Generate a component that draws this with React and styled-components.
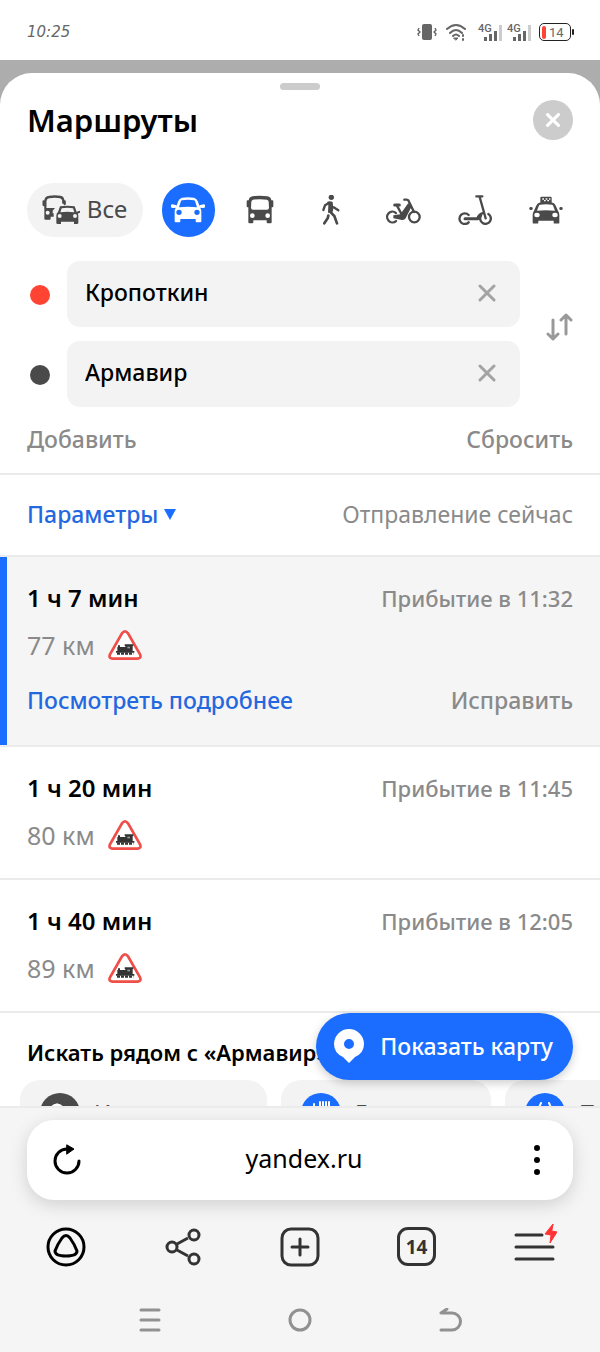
import React, { useState } from 'react';
import styled, { createGlobalStyle } from 'styled-components';

const colors = {
  blue: '#1a6dff',
  link: '#2468e0',
  red: '#ff4433',
  dark: '#4a4a4a',
  text: '#000',
  muted: '#8a8a8a',
  field: '#f3f3f3',
  panel: '#f5f5f5',
  line: '#ebebeb',
};

const GlobalStyle = createGlobalStyle`
  * {
    box-sizing: border-box;
  }

  body {
    margin: 0;
    background: #adadad;
    color: ${colors.text};
    font-family: 'Noto Sans', 'Open Sans', sans-serif;
  }

  button, input {
    margin: 0;
    padding: 0;
    border: 0;
    background: none;
    color: inherit;
    font: inherit;
  }

  button {
    cursor: pointer;
  }

  h1, h2, p, ul {
    margin: 0;
    padding: 0;
    font-weight: 500;
  }

  svg {
    display: block;
    flex: none;
  }
`;

const Screen = styled.div`
  height: 100vh;
  display: flex;
  flex-direction: column;
`;

const StatusBar = styled.header`
  height: 60px;
  flex: none;
  padding: 4px 26px 0 27px;
  display: flex;
  align-items: center;
  justify-content: space-between;
  background: #fff;
  color: #666;
`;

const Clock = styled.time`
  font-family: 'DejaVu Sans', sans-serif;
  font-size: 15px;
  font-style: italic;
`;

const StatusIcons = styled.div`
  display: flex;
  align-items: center;
  gap: 8px;
`;

const Signals = styled.div`
  margin-left: 3px;
  display: flex;
  gap: 5px;
`;

const SignalText = styled.text`
  font-family: Roboto, sans-serif;
  font-size: 11px;
  font-weight: 500;
  fill: #666;
`;

const Battery = styled.div`
  width: 32px;
  height: 18px;
  margin-right: 3px;
  padding: 1px;
  display: flex;
  align-items: center;
  gap: 3px;
  position: relative;
  border: 1px solid #222;
  border-radius: 5px;
  font-family: Roboto, sans-serif;
  font-size: 13px;

  &::before {
    content: '';
    width: 4px;
    height: 13px;
    margin-left: 1px;
    border-radius: 2px;
    background: ${colors.red};
  }

  &::after {
    content: '';
    position: absolute;
    right: -4px;
    top: 5px;
    width: 2px;
    height: 6px;
    border-radius: 1px;
    background: #222;
  }
`;

const SheetArea = styled.div`
  flex: 1;
  min-height: 0;
  padding-top: 13px;
  display: flex;
  position: relative;
`;

const Sheet = styled.main`
  flex: 1;
  min-width: 0;
  overflow: hidden;
  background: #fff;
  border-radius: 32px 32px 0 0;
`;

const Handle = styled.div`
  width: 40px;
  height: 7px;
  margin: 10px auto;
  border-radius: 4px;
  background: #ccc;
`;

const SheetHead = styled.div`
  padding: 0 27px;
  display: flex;
  align-items: center;
  justify-content: space-between;
`;

const Title = styled.h1`
  font-size: 31px;
  line-height: 40px;
  font-weight: 600;
`;

const CloseButton = styled.button`
  width: 40px;
  height: 40px;
  display: grid;
  place-items: center;
  border-radius: 50%;
  background: #ccc;
`;

const Modes = styled.nav`
  padding: 43px 27px 24px;
  display: flex;
  justify-content: space-between;
`;

const ModeButton = styled.button`
  height: 54px;
  width: ${({ $wide }) => ($wide ? '116px' : '53px')};
  display: flex;
  align-items: center;
  justify-content: center;
  gap: 6px;
  border-radius: 27px;
  font-size: 24px;
  color: ${({ $active }) => ($active ? '#fff' : colors.dark)};
  background: ${({ $active, $wide }) => ($active ? colors.blue : $wide ? colors.field : 'transparent')};
`;

const ModeLabel = styled.span`
  padding: 0 2px 4px 0;
`;

const Points = styled.form`
  padding: 0 27px;
  display: flex;
  align-items: center;
  justify-content: space-between;
`;

const PointList = styled.div`
  flex: 1;
  display: flex;
  flex-direction: column;
  gap: 14px;
`;

const Point = styled.label`
  display: flex;
  align-items: center;
  gap: 17px;
`;

const Dot = styled.span`
  width: 20px;
  height: 20px;
  margin: 2px 0 0 3px;
  border-radius: 50%;
  background: ${({ $color }) => $color};
`;

const Field = styled.span`
  flex: 1;
  min-width: 0;
  height: 66px;
  padding: 0 24px 2px 18px;
  display: flex;
  align-items: center;
  border-radius: 13px;
  background: ${colors.field};

  input {
    flex: 1;
    min-width: 0;
    padding-bottom: 2px;
    outline: 0;
    font-size: 23px;
    font-weight: 500;
  }
`;

const SwapButton = styled.button`
  width: 27px;
  margin-left: 26px;
  padding-bottom: 14px;
`;

const Line = styled.div`
  display: flex;
  align-items: center;
  justify-content: space-between;
`;

const ActionsLine = styled(Line)`
  padding: 16px 27px 18px;
  border-bottom: 2px solid ${colors.line};
`;

const OptionsLine = styled(Line)`
  padding: 23px 27px 25px;
  border-bottom: 2px solid ${colors.line};
`;

const TextButton = styled.button`
  display: flex;
  align-items: center;
  gap: 6px;
  font-size: 23px;
  line-height: 32px;
  font-weight: ${({ $light }) => ($light ? 400 : 500)};
  color: ${({ $blue }) => ($blue ? colors.link : colors.muted)};
`;

const Route = styled.li`
  list-style: none;
  padding: 22px 27px;
  border-bottom: 2px solid ${colors.line};
  background: ${({ $selected }) => ($selected ? colors.panel : '#fff')};
  box-shadow: ${({ $selected }) => ($selected ? `inset 7px 0 ${colors.blue}` : 'none')};
`;

const Duration = styled.h2`
  font-size: 24px;
  line-height: 38px;
  font-weight: 600;
`;

const Arrival = styled.span`
  font-size: 22px;
  line-height: 38px;
  color: ${colors.muted};
`;

const Distance = styled.p`
  margin-top: 7px;
  display: flex;
  align-items: center;
  gap: 13px;
  font-size: 25px;
  line-height: 42px;
  font-weight: 400;
  color: ${colors.muted};
`;

const RouteActions = styled(Line)`
  margin-top: 18px;
  padding-bottom: 7px;
`;

const Nearby = styled.section`
  padding-top: 23px;
`;

const NearbyTitle = styled.h2`
  padding: 0 27px;
  font-size: 22px;
  line-height: 32px;
  font-weight: 600;
  white-space: nowrap;
`;

const Chips = styled.div`
  padding: 12px 20px 0;
  display: flex;
  gap: 14px;
`;

const Chip = styled.button`
  flex: none;
  width: ${({ $width }) => $width}px;
  height: 66px;
  padding: 0 20px;
  display: flex;
  align-items: center;
  gap: 14px;
  border-radius: 20px;
  background: ${colors.field};
  font-size: 23px;
  color: ${colors.dark};
  white-space: nowrap;
`;

const MapButton = styled.button`
  position: absolute;
  right: 27px;
  bottom: 26px;
  height: 67px;
  padding: 0 20px 2px 18px;
  display: flex;
  align-items: center;
  gap: 16px;
  border-radius: 34px;
  background: ${colors.blue};
  box-shadow: 0 3px 10px rgba(0, 0, 0, .2);
  font-size: 23px;
  font-weight: 500;
  color: #fff;
`;

const Browser = styled.footer`
  flex: none;
  border-top: 2px solid ${colors.line};
  background: ${colors.panel};
  position: relative;
`;

const AddressBar = styled.div`
  height: 80px;
  margin: 12px 27px 0;
  padding: 0 24px;
  display: flex;
  align-items: center;
  justify-content: space-between;
  border-radius: 27px;
  background: #fff;
  box-shadow: 0 5px 18px rgba(0, 0, 0, .15);
  font-size: 25px;

  span {
    padding-bottom: 4px;
  }
`;

const Toolbar = styled.nav`
  height: 93px;
  padding: 0 8px 0 7px;
  display: grid;
  grid-template-columns: repeat(5, 1fr);
  align-items: center;
  justify-items: center;
`;

const TabCount = styled.button`
  width: 39px;
  height: 39px;
  border: 3px solid #333;
  border-radius: 11px;
  font-size: 19px;
  line-height: 32px;
  font-weight: 700;
  color: #333;
`;

const SystemNav = styled.nav`
  height: 59px;
  padding: 0 12.5% 6px;
  display: grid;
  grid-template-columns: repeat(3, 1fr);
  align-items: center;
  justify-items: center;
`;

const lineProps = { fill: 'none', stroke: 'currentColor', strokeLinecap: 'round', strokeLinejoin: 'round' };

const ModeIcon = ({ children }) => (
  <svg width="36" height="30" viewBox="0 0 108 90" fill="currentColor" fillRule="evenodd">{children}</svg>
);

// body, windscreen and headlights, shared by the car and the taxi
const CAR = 'M36 8Q54 5 72 8Q80 10 83 18L90 37Q94 43 94 52V79Q94 82 91 82H80Q77 82 77 79V72H31V79Q31 82 28 82H17Q14 82 14 79V52Q14 43 18 37L25 18Q28 10 36 8ZM36 16Q54 12 72 16Q75 17 76 21L81 37Q54 33 27 37L32 21Q33 17 36 16ZM19 52a8 8 0 1 0 16 0a8 8 0 1 0-16 0ZM73 52a8 8 0 1 0 16 0a8 8 0 1 0-16 0Z';

const CarIcon = () => (
  <ModeIcon>
    <path d="M3 31Q3 28 7 28L20 31V38L9 39Q3 39 3 35ZM105 31Q105 28 101 28L88 31V38L99 39Q105 39 105 35Z" />
    <path d={CAR} />
  </ModeIcon>
);

const BusIcon = () => (
  <ModeIcon>
    <path d="M32 4Q54 0 76 4Q87 6 88 16H91Q94 16 94 20V34Q94 37 91 37H89V82Q89 85 86 85H77Q74 85 74 82V76H34V82Q34 85 31 85H22Q19 85 19 82V37H17Q14 37 14 34V20Q14 16 17 16H20Q21 6 32 4ZM33 14Q54 11 75 14Q79 15 80 20L81 38Q81 44 75 44H33Q27 44 27 38L28 20Q29 15 33 14ZM24 62a7 7 0 1 0 14 0a7 7 0 1 0-14 0ZM70 62a7 7 0 1 0 14 0a7 7 0 1 0-14 0Z" />
  </ModeIcon>
);

const AllIcon = () => (
  <svg width="40" height="32" viewBox="0 0 120 96" fill="currentColor" fillRule="evenodd">
    <path {...lineProps} strokeWidth="7" d="M13 40V20Q15 10 24 9Q42 6 58 9Q66 11 67 20V26" />
    <path {...lineProps} strokeWidth="7" d="M8 22V33M71 22V30" />
    <path d="M10 42H42L35 50V58H38V68H29V74Q29 77 26 77H13Q10 77 10 74ZM14 56a6 6 0 1 0 12 0a6 6 0 1 0-12 0Z" />
    <path d="M57 37Q79 33 101 37L107 54Q112 58 112 65V86Q112 90 108 90H99V83H60V90H50Q46 90 46 86V65Q46 58 51 54Z" />
    <path d="M62 43Q79 40 96 43L100 55Q79 52 58 55Z" fill={colors.field} />
    <circle cx="56" cy="66" r="6" fill={colors.field} />
    <circle cx="102" cy="66" r="6" fill={colors.field} />
    <path d="M107 53L117 50V56L109 59Z" />
  </svg>
);

const WalkIcon = () => (
  <ModeIcon>
    <circle cx="55" cy="7" r="8" />
    <path d="M42 21Q50 17 59 21L61 42L58 54L45 53L46 30Z" />
    <path {...lineProps} strokeWidth="7" d="M48 24L36 31L31 45M62 37L76 46" />
    <path {...lineProps} strokeWidth="8" d="M51 50L64 63L72 85M46 62L44 70L34 85" />
  </ModeIcon>
);

const BikeIcon = () => (
  <ModeIcon>
    <path {...lineProps} strokeWidth="7" d="M33 54A16 16 0 1 0 33 78M104 66A16 16 0 1 1 72 66A16 16 0 1 1 104 66" />
    <path {...lineProps} strokeWidth="7" d="M58 14H64Q70 14 72 20L87 51M36 32L51 60" />
    <path {...lineProps} strokeWidth="9" d="M29 30H43" />
    <path d="M25 61L46 58L70 24L79 36L62 70Q58 76 51 75L25 70Z" />
  </ModeIcon>
);

const ScooterIcon = () => (
  <ModeIcon>
    <path {...lineProps} strokeWidth="7" d="M35 60A16 16 0 1 0 35 82M94 57A16 16 0 1 1 72 62" />
    <path {...lineProps} strokeWidth="7" d="M58 4H76M68 6L86 70" />
    <path {...lineProps} strokeWidth="9" d="M24 71H62" />
    <path d="M57 71Q62 53 80 50L81 57Q69 61 67 75H57Z" />
  </ModeIcon>
);

const TaxiIcon = () => (
  <ModeIcon>
    <path d="M40 5H68Q71 5 71 9V24H37V9Q37 5 40 5ZM43 10V14H48V10ZM53 10V14H58V10ZM63 10V14H67V10ZM48 15V19H53V15ZM58 15V19H63V15Z" />
    <path transform="translate(0 16) scale(1 .85)" d={CAR} />
    <rect x="4" y="36" width="10" height="9" rx="4" />
    <rect x="94" y="36" width="10" height="9" rx="4" />
  </ModeIcon>
);

const CrossIcon = ({ size, width, color }) => (
  <svg width={size} height={size} viewBox="0 0 18 18" fill="none" stroke={color} strokeWidth={width} strokeLinecap="round">
    <path d="M2 2L16 16M16 2L2 16" />
  </svg>
);

const SwapIcon = () => (
  <svg width="27" height="28" viewBox="0 0 27 28" fill="none" stroke="#999" strokeWidth="3" strokeLinecap="round" strokeLinejoin="round">
    <path d="M7 7V26M2 21L7 26L12 21M20 21V2M15 7L20 2L25 7" />
  </svg>
);

const CrossingSign = () => (
  <svg width="34" height="30" viewBox="0 0 102 90" role="img" aria-label="Железнодорожный переезд">
    <path d="M42 10Q51-2 60 10L96 73Q101 85 89 86H13Q1 85 6 73Z" fill="#fff" stroke="#f04e49" strokeWidth="8" />
    <path d="M30 46H36V51H52V48H50V43H76V48H74V63H79V68H24V63H28V51H30Z" fill="#333" />
    <path d="M58 50H66V55H58Z" fill="#999" />
    <path d="M27 71H76" stroke="#333" strokeWidth="7" strokeDasharray="9 3" />
  </svg>
);

const Signal = () => (
  <svg width="24" height="18" viewBox="0 0 24 18" fill="#666">
    <SignalText x="0" y="9">4G</SignalText>
    <path d="M6 14h3v4H6zM11 11h3v7h-3zM16 8h3v10h-3z" />
    <path d="M21 2h3v16h-3z" fill="#ccc" />
  </svg>
);

const modes = [
  { id: 'car', label: 'На машине', Icon: CarIcon },
  { id: 'bus', label: 'На автобусе', Icon: BusIcon },
  { id: 'walk', label: 'Пешком', Icon: WalkIcon },
  { id: 'bike', label: 'На велосипеде', Icon: BikeIcon },
  { id: 'scooter', label: 'На самокате', Icon: ScooterIcon },
  { id: 'taxi', label: 'На такси', Icon: TaxiIcon },
];

const routes = [
  { time: '1 ч 7 мин', arrival: '11:32', distance: '77 км' },
  { time: '1 ч 20 мин', arrival: '11:45', distance: '80 км' },
  { time: '1 ч 40 мин', arrival: '12:05', distance: '89 км' },
];

const chips = [
  {
    label: 'Искать места',
    width: 247,
    color: colors.dark,
    icon: <path {...lineProps} strokeWidth="3" d="M17 12a6 6 0 1 0 .1 0M22 22l6 6" />,
  },
  {
    label: 'Где поесть',
    width: 210,
    color: colors.blue,
    icon: <path {...lineProps} strokeWidth="2" d="M13 11v19M19 9v8M22 9v21M25 9v8M28 9v8" />,
  },
  {
    label: 'Продукты',
    width: 210,
    color: colors.blue,
    icon: <path {...lineProps} strokeWidth="2" d="M16 10l-4 9h16l-4-9M12 19l3 10h10l3-10" />,
  },
];

const PointField = ({ color, label, value, onChange }) => (
  <Point>
    <Dot $color={color} />
    <Field>
      <input aria-label={label} value={value} onChange={(e) => onChange(e.target.value)} />
      <button type="button" aria-label="Очистить" onClick={() => onChange('')}>
        <CrossIcon size={18} width={3} color="#a3a3a3" />
      </button>
    </Field>
  </Point>
);

const App = () => {
  const [mode, setMode] = useState('car');
  const [selected, setSelected] = useState(0);
  const [from, setFrom] = useState('Кропоткин');
  const [to, setTo] = useState('Армавир');

  const swap = () => {
    setFrom(to);
    setTo(from);
  };

  return (
    <Screen>
      <GlobalStyle />
      <StatusBar>
        <Clock>10:25</Clock>
        <StatusIcons>
          <svg width="20" height="18" viewBox="0 0 20 18" fill="#666">
            <rect x="5" y="1" width="10" height="16" rx="2" />
            <path d="M2 5L1 7L3 9L1 11L2 13M18 5L19 7L17 9L19 11L18 13" fill="none" stroke="#666" strokeWidth="1.4" />
          </svg>
          <svg width="22" height="18" viewBox="0 0 22 18" fill="none" stroke="#666" strokeWidth="2" strokeLinecap="round">
            <path d="M2 6Q11-2 20 6M5 10Q11 4 17 10M8 13Q11 10 14 13" />
            <path d="M9 15H13L11 17Z" fill="#666" strokeWidth="1" />
            <path d="M18 12v1M18 16v1" />
          </svg>
          <Signals>
            <Signal />
            <Signal />
          </Signals>
          <Battery>14</Battery>
        </StatusIcons>
      </StatusBar>

      <SheetArea>
        <Sheet>
          <Handle />
          <SheetHead>
            <Title>Маршруты</Title>
            <CloseButton aria-label="Закрыть">
              <CrossIcon size={14} width={4} color="#fff" />
            </CloseButton>
          </SheetHead>

          <Modes>
            <ModeButton $wide $active={mode === 'all'} onClick={() => setMode('all')}>
              <AllIcon />
              <ModeLabel>Все</ModeLabel>
            </ModeButton>
            {modes.map(({ id, label, Icon }) => (
              <ModeButton key={id} aria-label={label} $active={mode === id} onClick={() => setMode(id)}>
                <Icon />
              </ModeButton>
            ))}
          </Modes>

          <Points>
            <PointList>
              <PointField color={colors.red} label="Откуда" value={from} onChange={setFrom} />
              <PointField color={colors.dark} label="Куда" value={to} onChange={setTo} />
            </PointList>
            <SwapButton type="button" aria-label="Поменять местами" onClick={swap}>
              <SwapIcon />
            </SwapButton>
          </Points>

          <ActionsLine>
            <TextButton>Добавить</TextButton>
            <TextButton>Сбросить</TextButton>
          </ActionsLine>

          <OptionsLine>
            <TextButton $blue>
              Параметры
              <svg width="12" height="11" viewBox="0 0 12 11" fill={colors.blue}>
                <path d="M0 0H12L6 11Z" />
              </svg>
            </TextButton>
            <TextButton $light>Отправление сейчас</TextButton>
          </OptionsLine>

          <ul>
            {routes.map(({ time, arrival, distance }, i) => (
              <Route key={time} $selected={i === selected} onClick={() => setSelected(i)}>
                <Line>
                  <Duration>{time}</Duration>
                  <Arrival>Прибытие в {arrival}</Arrival>
                </Line>
                <Distance>
                  {distance}
                  <CrossingSign />
                </Distance>
                {i === selected && (
                  <RouteActions>
                    <TextButton $blue>Посмотреть подробнее</TextButton>
                    <TextButton>Исправить</TextButton>
                  </RouteActions>
                )}
              </Route>
            ))}
          </ul>

          <Nearby>
            <NearbyTitle>Искать рядом с «Армавир»</NearbyTitle>
            <Chips>
              {chips.map(({ label, width, color, icon }) => (
                <Chip key={label} $width={width}>
                  <svg width="40" height="40" viewBox="0 0 40 40" color="#fff">
                    <circle cx="20" cy="20" r="20" fill={color} />
                    {icon}
                  </svg>
                  <span>{label}</span>
                </Chip>
              ))}
            </Chips>
          </Nearby>
        </Sheet>

        <MapButton>
          <svg width="30" height="34" viewBox="0 0 30 34" fill="#fff" fillRule="evenodd">
            <path d="M15 0A15 15 0 0 1 30 15Q30 24 21 28L15 34L9 28Q0 24 0 15A15 15 0 0 1 15 0ZM10 15a5 5 0 1 0 10 0a5 5 0 1 0-10 0Z" />
          </svg>
          Показать карту
        </MapButton>
      </SheetArea>

      <Browser>
        <AddressBar>
          <button aria-label="Обновить">
            <svg width="32" height="32" viewBox="0 0 32 32" fill="none" stroke="#000" strokeWidth="3" strokeLinecap="round">
              <path d="M16 5A12 12 0 1 0 28 17" />
              <path d="M16 1L23 5L16 10Z" fill="#000" strokeWidth="1" strokeLinejoin="round" />
            </svg>
          </button>
          <span>yandex.ru</span>
          <button aria-label="Меню страницы">
            <svg width="24" height="30" viewBox="0 0 24 30">
              <circle cx="12" cy="3" r="3" />
              <circle cx="12" cy="15" r="3" />
              <circle cx="12" cy="27" r="3" />
            </svg>
          </button>
        </AddressBar>

        <Toolbar>
          <button aria-label="Алиса">
            <svg width="40" height="40" viewBox="0 0 40 40" fill="none" stroke="#000" strokeWidth="3">
              <circle cx="20" cy="20" r="18" />
              <path d="M16 11Q20 6 24 11Q29 18 31 24Q31 29 20 29Q9 29 9 24Q11 18 16 11Z" />
            </svg>
          </button>
          <button aria-label="Поделиться">
            <svg width="36" height="38" viewBox="0 0 36 38" fill="none" stroke="#333" strokeWidth="3">
              <path d="M12 16L23 10M12 22L23 28" />
              <circle cx="7" cy="19" r="5" />
              <circle cx="29" cy="7" r="5" />
              <circle cx="29" cy="31" r="5" />
            </svg>
          </button>
          <button aria-label="Новая вкладка">
            <svg width="40" height="40" viewBox="0 0 40 40" fill="none" stroke="#333" strokeWidth="3" strokeLinecap="round">
              <rect x="2" y="2" width="36" height="36" rx="9" />
              <path d="M20 12V28M12 20H28" />
            </svg>
          </button>
          <TabCount aria-label="Вкладки">14</TabCount>
          <button aria-label="Меню">
            <svg width="46" height="46" viewBox="0 0 46 46" fill="none" stroke="#333" strokeWidth="3" strokeLinecap="round">
              <path d="M5 11H31M5 23H42M5 35H42" />
              <path d="M42 0L34 10L40 11L39 19L46 8L41 7Z" fill="#f33" stroke="#f33" strokeWidth="1" />
            </svg>
          </button>
        </Toolbar>

        <SystemNav>
          <button aria-label="Недавние">
            <svg width="24" height="24" viewBox="0 0 24 24" fill="none" stroke="#919191" strokeWidth="3" strokeLinecap="round">
              <path d="M3 2H21M3 12H21M3 22H21" />
            </svg>
          </button>
          <button aria-label="Домой">
            <svg width="24" height="24" viewBox="0 0 24 24" fill="none" stroke="#919191" strokeWidth="3">
              <circle cx="12" cy="12" r="10" />
            </svg>
          </button>
          <button aria-label="Назад">
            <svg width="24" height="24" viewBox="0 0 24 24" fill="none" stroke="#919191" strokeWidth="3" strokeLinecap="round" strokeLinejoin="round">
              <path d="M9 1L3 5H14A8 8 0 0 1 14 22H3" />
            </svg>
          </button>
        </SystemNav>
      </Browser>
    </Screen>
  );
};

export default App;
